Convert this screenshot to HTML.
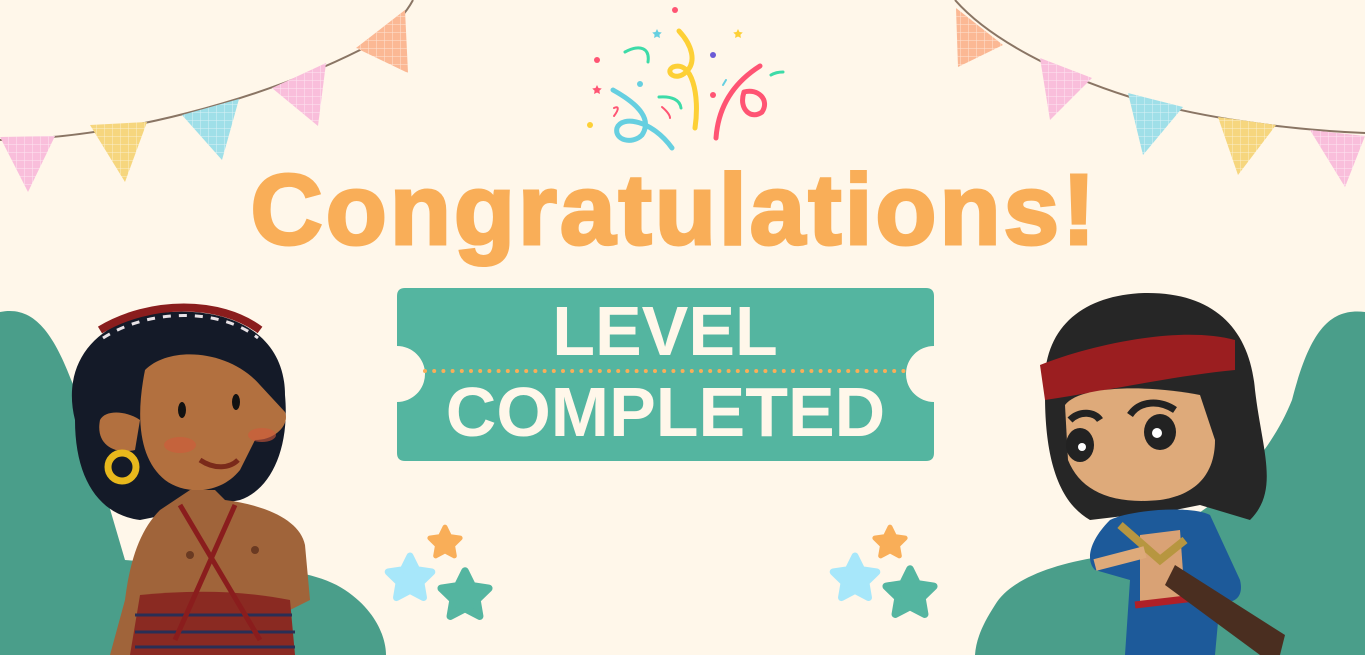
<!DOCTYPE html>
<html><head><meta charset="utf-8"><style>
html,body{margin:0;padding:0;background:#fff7ea;}
body{width:1365px;height:655px;overflow:hidden;position:relative;font-family:"Liberation Sans",sans-serif;}
svg{position:absolute;left:0;top:0;}
.t{position:absolute;left:0;width:1365px;text-align:center;font-weight:bold;}
</style></head><body>
<svg width="1365" height="655" viewBox="0 0 1365 655">
<defs>
<path id="st" d="M0,-1 L.294,-.405 .951,-.309 .476,.155 .588,.809 0,.5 -.588,.809 -.476,.155 -.951,-.309 -.294,-.405Z"/>
<pattern id="grid" width="8" height="8" patternUnits="userSpaceOnUse"><path d="M0,0H8M0,0V8" stroke="#fff" stroke-opacity=".6" stroke-width="1"/></pattern>
</defs>
<path d="M0,312 C35,305 55,335 75,390 L125,560 C210,568 300,560 345,590 C378,612 386,640 386,655 L0,655Z" fill="#4a9e8a"/>
<path d="M1365,312 C1330,308 1310,330 1292,400 C1260,480 1180,540 1098,557 C1050,565 1010,580 995,605 C982,625 976,640 975,655 L1365,655Z" fill="#4a9e8a"/>
<path d="M0,140 C120,138 260,100 360,50 C390,32 405,15 413,0" stroke="#8a7564" stroke-width="2" fill="none"/>
<path d="M955,0 C990,40 1060,75 1130,97 C1200,118 1290,130 1365,133" stroke="#8a7564" stroke-width="2" fill="none"/>
<g>
<polygon points="0,137 55,136 28,192" fill="#f9bedb"/>
<polygon points="90,125 147,122 125,182" fill="#f6d67e"/>
<polygon points="182,115 239,99 222,160" fill="#9fdfe8"/>
<polygon points="272,88 326,63 318,126" fill="#f9bedb"/>
<polygon points="356,48 405,10 408,73" fill="#fbb894"/>
<polygon points="956,8 1003,45 958,67" fill="#fbb894"/>
<polygon points="1040,58 1092,78 1050,120" fill="#f9bedb"/>
<polygon points="1128,93 1183,107 1143,155" fill="#9fdfe8"/>
<polygon points="1218,117 1276,125 1238,175" fill="#f6d67e"/>
<polygon points="1310,130 1365,136 1345,187" fill="#f9bedb"/>
</g>
<g fill="url(#grid)">
<polygon points="0,137 55,136 28,192"/><polygon points="90,125 147,122 125,182"/><polygon points="182,115 239,99 222,160"/><polygon points="272,88 326,63 318,126"/><polygon points="356,48 405,10 408,73"/>
<polygon points="956,8 1003,45 958,67"/><polygon points="1040,58 1092,78 1050,120"/><polygon points="1128,93 1183,107 1143,155"/><polygon points="1218,117 1276,125 1238,175"/><polygon points="1310,130 1365,136 1345,187"/>
</g>
<g fill="none" stroke-linecap="round" stroke-width="5">
<path d="M679,31 C692,45 697,62 686,72 C676,82 664,72 673,67 C692,60 700,95 695,128" stroke="#fdd036"/>
<path d="M716,138 C718,110 730,85 760,66 M744,92 C758,88 770,100 762,112 C752,120 738,110 744,92" stroke="#ff5473"/>
<path d="M613,90 C640,105 652,120 642,135 C632,145 614,140 617,128 C622,115 652,120 672,148" stroke="#66cfe0"/>
<path d="M625,52 C640,44 650,48 648,62" stroke="#3ddba8" stroke-width="3"/>
<path d="M659,97 C672,96 680,100 681,108" stroke="#3ddba8" stroke-width="3"/>
<path d="M662,107 C668,112 670,116 670,118" stroke="#ff5473" stroke-width="2"/>
<path d="M614,108 C618,106 620,108 614,116" stroke="#ff5473" stroke-width="2"/>
<path d="M771,75 C776,72 781,72 783,72" stroke="#3ddba8" stroke-width="3"/>
<path d="M723,85 L726,80" stroke="#66cfe0" stroke-width="2"/>
</g>
<g>
<circle cx="675" cy="10" r="3" fill="#ff5473"/><circle cx="597" cy="60" r="3" fill="#ff5473"/>
<circle cx="640" cy="84" r="3" fill="#66cfe0"/><circle cx="713" cy="55" r="3" fill="#6b5bd6"/>
<circle cx="713" cy="95" r="3" fill="#ff5473"/><circle cx="590" cy="125" r="3" fill="#fdd036"/>
<use href="#st" transform="translate(657,34) scale(5)" fill="#66cfe0"/>
<use href="#st" transform="translate(738,34) scale(5)" fill="#fdd036"/>
<use href="#st" transform="translate(597,90) scale(5)" fill="#ff5473"/>
</g>
<path d="M405,288 H926 Q934,288 934,296 V346 A28,28 0 0 0 934,402 V453 Q934,461 926,461 H405 Q397,461 397,453 V402 A28,28 0 0 0 397,346 V296 Q397,288 405,288Z" fill="#54b5a0"/>
<line x1="425" y1="371" x2="908" y2="371" stroke="#f9ae58" stroke-width="4" stroke-linecap="round" stroke-dasharray="0 9.2"/>
<g>
<use href="#st" transform="translate(445,543) scale(16)" fill="#f9ae58" stroke="#f9ae58" stroke-width=".3" stroke-linejoin="round"/>
<use href="#st" transform="translate(410,579) scale(23)" fill="#a7e7fa" stroke="#a7e7fa" stroke-width=".3" stroke-linejoin="round"/>
<use href="#st" transform="translate(465,596) scale(25)" fill="#54b5a0" stroke="#54b5a0" stroke-width=".3" stroke-linejoin="round"/>
<use href="#st" transform="translate(890,543) scale(16)" fill="#f9ae58" stroke="#f9ae58" stroke-width=".3" stroke-linejoin="round"/>
<use href="#st" transform="translate(855,579) scale(23)" fill="#a7e7fa" stroke="#a7e7fa" stroke-width=".3" stroke-linejoin="round"/>
<use href="#st" transform="translate(910,594) scale(25)" fill="#54b5a0" stroke="#54b5a0" stroke-width=".3" stroke-linejoin="round"/>
</g>
<g>
<path d="M75,420 C60,360 100,315 170,312 C240,308 285,340 285,395 C290,450 270,490 240,500 L140,520 C100,515 75,480 75,420Z" fill="#141a28"/>
<path d="M100,330 C150,300 220,300 260,330" stroke="#8a1d1d" stroke-width="8" fill="none"/>
<path d="M103,338 C150,308 220,308 258,338" stroke="#e8e2e6" stroke-width="3" stroke-dasharray="8 8" fill="none"/>
<path d="M145,370 C170,345 230,350 260,385 L285,412 C290,425 275,440 255,440 L240,470 C220,495 185,495 165,480 C140,460 135,420 145,370Z" fill="#b2703f"/>
<path d="M100,420 C95,445 115,455 135,450 L140,420 C125,410 105,410 100,420Z" fill="#b2703f"/>
<circle cx="122" cy="467" r="14" fill="none" stroke="#e8b81c" stroke-width="7"/>
<ellipse cx="182" cy="410" rx="4" ry="8" fill="#111"/><ellipse cx="236" cy="402" rx="4" ry="8" fill="#111"/>
<ellipse cx="180" cy="445" rx="16" ry="8" fill="#d25a3a" opacity=".6"/><ellipse cx="262" cy="435" rx="14" ry="7" fill="#d25a3a" opacity=".6"/>
<path d="M200,460 C215,470 230,468 238,460" stroke="#7a2a1a" stroke-width="5" fill="none"/>
<path d="M190,490 L215,490 L225,500 C265,505 300,520 305,545 L310,600 L290,610 L275,640 L285,655 L110,655 L125,600 C130,560 140,530 160,510 Z" fill="#a0643a"/>
<path d="M140,595 C190,590 240,590 290,600 L295,655 L130,655Z" fill="#8a2a22"/>
<path d="M135,615 H292 M135,632 H295 M135,647 H295" stroke="#2a2f55" stroke-width="3"/>
<path d="M180,505 L260,640 M235,505 L175,640" stroke="#8a1d1d" stroke-width="5"/>
<circle cx="190" cy="555" r="4" fill="#6a3a22"/><circle cx="255" cy="550" r="4" fill="#6a3a22"/>
</g>
<g>
<path d="M1045,395 C1040,330 1080,295 1145,293 C1215,292 1250,330 1255,390 C1262,450 1280,490 1250,520 L1200,505 L1175,510 L1090,520 C1055,500 1045,450 1045,395Z" fill="#262626"/>
<path d="M1040,365 C1090,345 1180,325 1235,340 L1235,370 C1180,375 1110,390 1045,400Z" fill="#9b1e20"/>
<path d="M1065,405 C1080,385 1150,385 1200,395 L1215,440 C1215,475 1195,495 1160,500 C1110,505 1080,490 1068,460Z" fill="#deaa7a"/>
<ellipse cx="1080" cy="445" rx="14" ry="17" fill="#222"/><circle cx="1082" cy="447" r="4" fill="#fff"/>
<ellipse cx="1160" cy="432" rx="16" ry="18" fill="#222"/><circle cx="1157" cy="433" r="5" fill="#fff"/>
<path d="M1070,420 C1080,410 1095,412 1100,420 M1130,415 C1140,400 1160,400 1175,410" stroke="#222" stroke-width="7" fill="none"/>
<path d="M1110,520 C1130,510 1190,505 1210,515 L1240,580 C1245,600 1230,605 1220,600 L1215,655 L1125,655 L1130,580 L1095,570 C1085,560 1090,540 1110,520Z" fill="#1d5a9a"/>
<path d="M1140,535 L1180,530 L1185,600 L1140,605Z" fill="#d9a275"/>
<path d="M1135,605 L1195,598" stroke="#b02027" stroke-width="7"/>
<path d="M1175,565 L1285,635 L1280,655 L1260,655 L1165,585Z" fill="#4a2e20"/>
<path d="M1120,525 L1160,560 L1185,540" stroke="#b79640" stroke-width="8" fill="none"/>
<path d="M1095,565 L1145,552" stroke="#deaa7a" stroke-width="12"/>
</g>
</svg>
<div class="t" style="top:150px;font-size:100px;letter-spacing:3px;color:#f9ae58;line-height:120px;left:-8px;-webkit-text-stroke:3px #f9ae58;">Congratulations!</div>
<div class="t" style="top:296px;font-size:70px;color:#fff7ea;line-height:70px;width:1330px;">LEVEL</div>
<div class="t" style="top:377px;font-size:70px;color:#fff7ea;line-height:70px;width:1331px;">COMPLETED</div>
</body></html>
